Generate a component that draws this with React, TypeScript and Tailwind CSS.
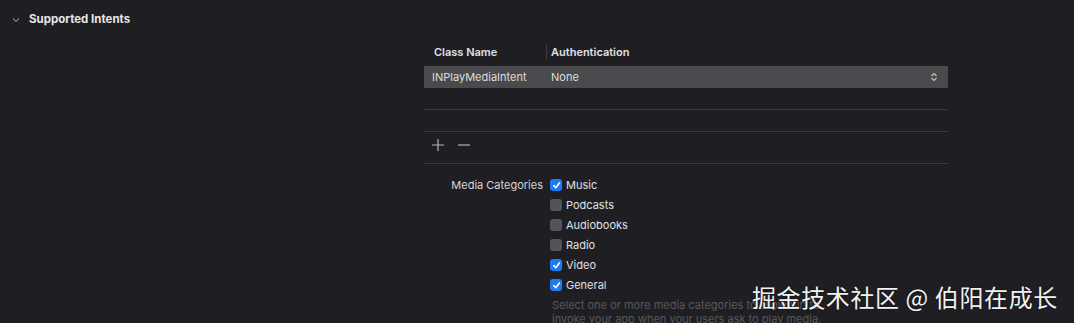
import React from "react";

const font = { fontFamily: "Inter, 'Noto Sans', sans-serif" };

function Checkbox({ checked }: { checked: boolean }) {
  if (checked) {
    return (
      <div className="w-[12px] h-[12px] rounded-[3px] bg-[#1d7cf2] flex items-center justify-center">
        <svg width="9" height="9" viewBox="0 0 10 10">
          <path d="M2 5.2 L4.2 7.5 L8.2 2.2" fill="none" stroke="#fff" strokeWidth="1.8" strokeLinecap="round" strokeLinejoin="round" />
        </svg>
      </div>
    );
  }
  return <div className="w-[12px] h-[12px] rounded-[3px] bg-[#545458]" />;
}

const categories = [
  { name: "Music", checked: true },
  { name: "Podcasts", checked: false },
  { name: "Audiobooks", checked: false },
  { name: "Radio", checked: false },
  { name: "Video", checked: true },
  { name: "General", checked: true },
];

export default function App() {
  return (
    <div className="relative w-[1074px] h-[323px] overflow-hidden bg-[#1f1f23] text-[11px] text-[#e2e2e4]" style={font}>
      <div className="flex items-center h-[14px] mt-[13px] pl-[11px]">
        <svg width="10" height="10" viewBox="0 0 10 10" className="mr-[8px]">
          <path d="M2 3.5 L5 6.5 L8 3.5" fill="none" stroke="#7d7d82" strokeWidth="1.2" />
        </svg>
        <span className="font-bold text-[11.5px] text-[#e6e6e8]">Supported Intents</span>
      </div>

      <div className="ml-[424px] w-[524px] mt-[15px]">
        <div className="flex items-center h-[20px] font-semibold text-[#e0e0e2]">
          <div className="w-[123px] pl-[10px] border-r border-[#3e3e42] h-[16px] flex items-center">Class Name</div>
          <div className="pl-[4px]">Authentication</div>
        </div>
        <div className="mt-[4px] h-[22px] flex items-center bg-[#4a4a4c] text-[#dcdcde]">
          <div className="w-[127px] pl-[8px]">INPlayMediaIntent</div>
          <div className="flex-1">None</div>
          <svg width="8" height="10" viewBox="0 0 8 10" className="mr-[10px]">
            <path d="M1.5 4 L4 1.5 L6.5 4 M1.5 6 L4 8.5 L6.5 6" fill="none" stroke="#c8c8ca" strokeWidth="1.1" />
          </svg>
        </div>
        <div className="h-[22px] border-b border-[#3a3a3e]" />
        <div className="h-[22px] border-b border-[#3a3a3e]" />
        <div className="h-[32px] border-b border-[#3a3a3e] flex items-start pt-[6px] gap-[12px] pl-[7px]">
          <svg width="14" height="14" viewBox="0 0 14 14">
            <path d="M7 1 V13 M1 7 H13" stroke="#b4b4b8" strokeWidth="1.2" />
          </svg>
          <svg width="14" height="14" viewBox="0 0 14 14">
            <path d="M1 7 H13" stroke="#b4b4b8" strokeWidth="1.2" />
          </svg>
        </div>

        <div className="flex mt-[11px]">
          <div className="w-[119px] text-right text-[#d6d6d8] h-[20px] leading-[20px]">Media Categories</div>
          <div className="ml-[7px] flex flex-col">
            {categories.map((c) => (
              <div key={c.name} className="flex items-center gap-[4px] h-[20px]">
                <Checkbox checked={c.checked} />
                <span className="text-[#e0e0e2]">{c.name}</span>
              </div>
            ))}
            <div className="mt-[3px] ml-[2px] text-[#58585c] leading-[14px]">
              <div>Select one or more media categories to allow Siri to</div>
              <div>invoke your app when your users ask to play media.</div>
            </div>
          </div>
        </div>
      </div>

      <div
        className="absolute left-[752px] top-[281px] text-[24px] leading-[32px] text-[#f2f2f2] tracking-[0.6px]"
        style={{ fontFamily: "'Noto Sans CJK SC', sans-serif", textShadow: "0 0 2px rgba(0,0,0,0.6)" }}
      >
        掘金技术社区 @ 伯阳在成长
      </div>
    </div>
  );
}
